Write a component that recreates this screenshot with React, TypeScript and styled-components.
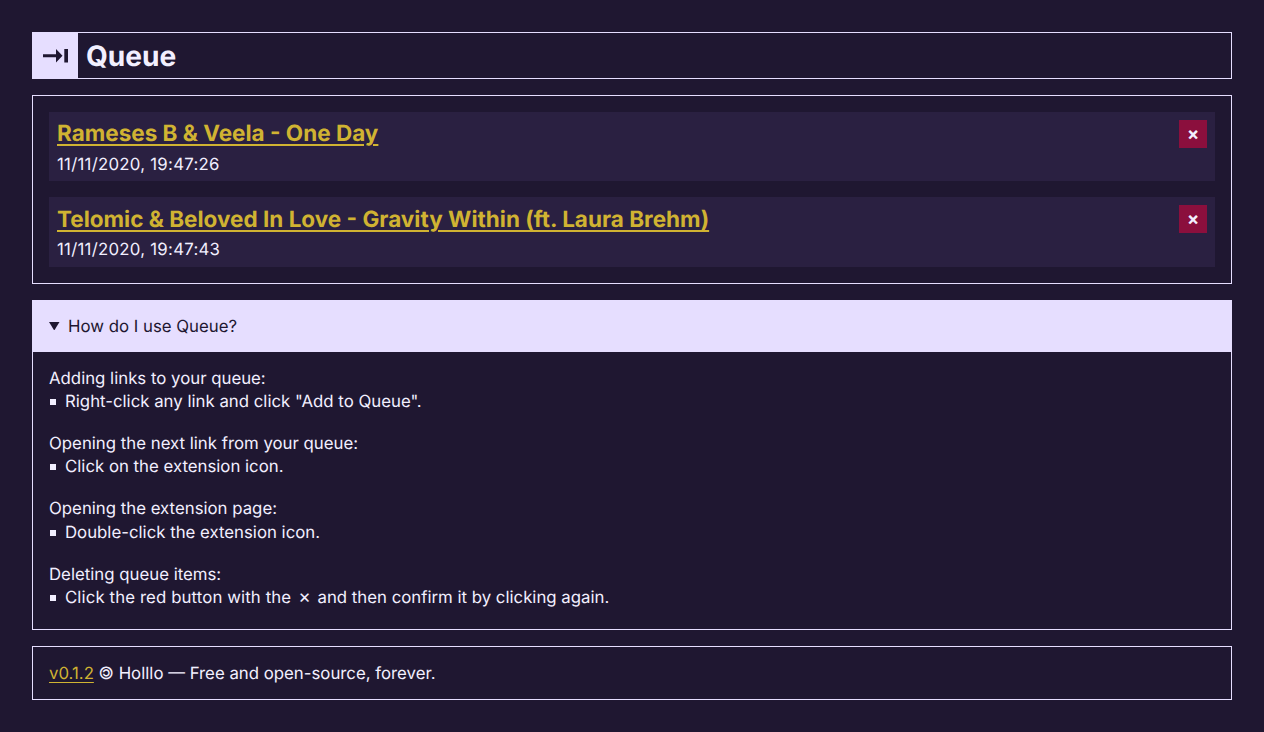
import React from 'react';
import styled, { createGlobalStyle } from 'styled-components';

const Global = createGlobalStyle`
  * { box-sizing: border-box; }
  html { font-size: 16px; background: #1f1731; }
  body { margin: 0; background: #1f1731; color: #f2efff; font-family: Inter, sans-serif; font-size: 16.8px; line-height: 23.52px; text-rendering: geometricPrecision; -webkit-font-smoothing: antialiased; }
  h1, h2, p, ul { margin: 0; padding: 0; }
`;
const Page = styled.main`
  display: flex; flex-direction: column; gap: 16px; padding: 32px;
`;
const Header = styled.header`
  display: flex; height: 47px; border: 1px solid #e6deff;
`;
const Logo = styled.div`
  width: 45px; background: #e6deff; color: #1f1731; display: flex; align-items: center; justify-content: center;
`;
const Title = styled.h1`
  font-size: 28.1px; line-height: 47px; font-weight: 700; margin-left: 8px;
`;
const Queue = styled.section`
  display: flex; flex-direction: column; gap: 16px; height: 189px; padding: 16px; border: 1px solid #e6deff;
`;
const Item = styled.article`
  display: flex; justify-content: space-between; height: 69.4px; padding: 8px; background: #2a2041;
`;
const ItemTitle = styled.h2`
  padding-top: 0.3px; font-size: 22.5px; line-height: 28.3px; font-weight: 700;
`;
const Link = styled.a<{ $thickness?: number }>`
  color: #d0b332; text-decoration: underline;
  text-decoration-thickness: ${(p) => p.$thickness ?? 1}px;
  text-underline-offset: 3px;
`;
const Time = styled.p`
  margin-top: 5.2px; letter-spacing: 0.26px;
`;
const Remove = styled.button`
  width: 28px; height: 28px; padding: 0 0 2px; border: 0; background: #8b0f3d; color: #f2efff; font: 700 18px Inter, sans-serif;
`;
const Help = styled.section`
  height: 330px; border: 1px solid #e6deff;
`;
const Summary = styled.div`
  display: flex; align-items: center; height: 51px; padding: 0 16px; gap: 8.5px; background: #e6deff; color: #1f1731;
  line-height: 24px;
  svg { margin-bottom: 1px; }
  span { padding-top: 1px; }
`;
const Answers = styled.div`
  display: flex; flex-direction: column; gap: 18.38px; padding: 15.5px 16px;
`;
const List = styled.ul`
  list-style: none;
`;
const Entry = styled.li`
  display: flex; align-items: center;
  &::before { content: ''; width: 6px; height: 6px; margin: 0 9px 1.5px 1px; background: currentColor; }
`;
const Times = styled.span`
  margin: 0 1.9px 0 2.2px; font-size: 19px; line-height: 1;
`;
const Lead = styled.span`
  letter-spacing: 0.11px;
`;
const Footer = styled.footer`
  height: 54px; padding: 15.5px 16px; border: 1px solid #e6deff;
`;

const items = [
  { title: 'Rameses B & Veela - One Day', time: '11/11/2020, 19:47:26' },
  { title: 'Telomic & Beloved In Love - Gravity Within (ft. Laura Brehm)', time: '11/11/2020, 19:47:43' },
];
const help = [
  { topic: 'Adding links to your queue:', answer: 'Right-click any link and click "Add to Queue".' },
  { topic: 'Opening the next link from your queue:', answer: 'Click on the extension icon.' },
  { topic: 'Opening the extension page:', answer: 'Double-click the extension icon.' },
  {
    topic: 'Deleting queue items:',
    answer: <><Lead>Click the red button with the </Lead><Times>×</Times> and then confirm it by clicking again.</>,
  },
];

export default function App() {
  return (
    <>
      <Global />
      <Page>
        <Header>
          <Logo>
            <svg width="25" height="15" viewBox="0 0 25 15" fill="currentColor">
              <path d="M0 6.200H13V1L19.500 7.800L13 14.600V9.300H0zM21.300 1H25V14.600H21.300z" />
            </svg>
          </Logo>
          <Title>Queue</Title>
        </Header>
        <Queue>
          {items.map((item) => (
            <Item key={item.title}>
              <div>
                <ItemTitle><Link $thickness={2}>{item.title}</Link></ItemTitle>
                <Time>{item.time}</Time>
              </div>
              <Remove>×</Remove>
            </Item>
          ))}
        </Queue>
        <Help>
          <Summary>
            <svg width="10.5" height="8.500" viewBox="0 0 10.5 8.5"><path d="M0 0h10.500L5.250 8.500z" fill="currentColor" /></svg>
            <span>How do I use Queue?</span>
          </Summary>
          <Answers>
            {help.map(({ topic, answer }) => (
              <div key={topic}>
                <p>{topic}</p>
                <List><Entry><span>{answer}</span></Entry></List>
              </div>
            ))}
          </Answers>
        </Help>
        <Footer><Link>v0.1.2</Link> 🄯 Holllo — Free and open-source, forever.</Footer>
      </Page>
    </>
  );
}
